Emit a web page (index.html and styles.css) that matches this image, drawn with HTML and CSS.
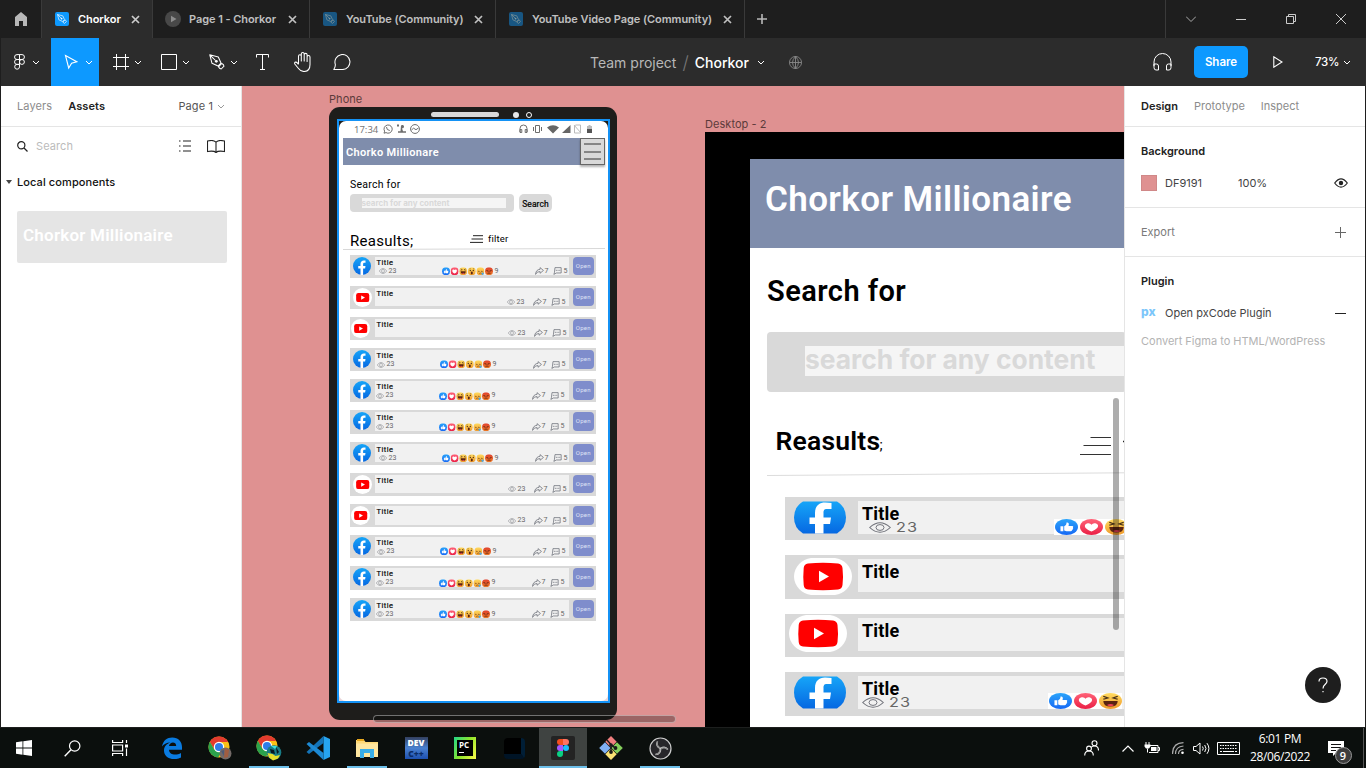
FILE: index.html
```html
<!DOCTYPE html>
<html lang="en">
<head>
<meta charset="utf-8">
<title>Chorkor – Figma</title>
<link rel="stylesheet" href="styles.css">
</head>
<body>
<svg class="defs" aria-hidden="true">
  <defs>
    <linearGradient id="fbg" x1="0" y1="0" x2="0" y2="1"><stop offset="0" stop-color="#16a5f8"/><stop offset="1" stop-color="#0668e2"/></linearGradient>
    <linearGradient id="likeg" x1="0" y1="0" x2="0" y2="1"><stop offset="0" stop-color="#2aa4fa"/><stop offset="1" stop-color="#1769f5"/></linearGradient>
    <linearGradient id="loveg" x1="0" y1="0" x2="0" y2="1"><stop offset="0" stop-color="#ff6378"/><stop offset="1" stop-color="#ea1f45"/></linearGradient>
    <linearGradient id="facg" x1="0" y1="0" x2="0" y2="1"><stop offset="0" stop-color="#ffdb60"/><stop offset="1" stop-color="#f09a2c"/></linearGradient>
    <linearGradient id="angg" x1="0" y1="0" x2="0" y2="1"><stop offset="0" stop-color="#e0402e"/><stop offset="1" stop-color="#ec7a24"/></linearGradient>
  </defs>
  <symbol id="chev" viewBox="0 0 8 5"><path d="M1 1l3 3 3-3" fill="none" stroke="currentColor"/></symbol>
  <symbol id="x" viewBox="0 0 9 9"><path d="M1 1l7 7M8 1l-7 7" stroke="currentColor" stroke-width="1.700"/></symbol>
  <symbol id="pen" viewBox="0 0 16 16"><path d="M.8.800l8.500 2.200 2.700 6-3 3-6-2.700zM.8.800l5.700 5.700M9.500 12.800l3.300-3.300q2 .8 2.200 2.700l-2.800 2.800q-1.900-.2-2.700-2.200z" fill="none" stroke="currentColor" stroke-width="1.050" stroke-linejoin="round"/><circle cx="7.300" cy="7.300" r="1.400" fill="currentColor"/></symbol>
  <symbol id="fb" viewBox="0 0 36 36" preserveAspectRatio="none"><circle cx="18" cy="18" r="18" fill="url(#fbg)"/><path d="M15 35.800V23h-4.500v-5.200H15v-3.900c0-4.500 2.600-7 6.700-7 1.500 0 3.300.3 3.300.3v4.300h-2c-2.200 0-2.800 1.200-2.800 2.600v3.700H25l-.8 5.200h-4v12.800c-1.700.3-3.500.3-5.200 0z" fill="#fff"/></symbol>
  <symbol id="fbwide" viewBox="0 0 52 33" preserveAspectRatio="none"><path d="M9 .5H43Q52 6 52 16.500T43 32.500H9Q0 27 0 16.500T9 .5z" fill="url(#fbg)"/><path d="M21 32.500V23h-5.500v-6.500H21V12C21 5 25 1.500 31 1.500q4 0 6.500.5v6H33c-3 0-3.500 1.500-3.500 4v4.500h7.500L36 23h-6.500v9.500z" fill="#fff"/></symbol>
  <symbol id="yt" viewBox="0 0 58 37" preserveAspectRatio="none"><path d="M17 0H41C50 1 58 9 58 18.500S50 36 41 37H17C8 36 0 28 0 18.500S8 1 17 0z" fill="#fff"/><path d="M14 5.500Q29 4 44 5.500q4 .5 4.500 4.500 1 8.500 0 17-.5 4-4.500 4.500-15 1.500-30 0-4-.5-4.300-4.500-.8-8.500 0-17Q10 6 14 5.500z" fill="#f00"/><path d="M25 12.800v11.400l10-5.700z" fill="#fff"/></symbol>
  <symbol id="ytround" viewBox="0 0 20 20"><circle cx="10" cy="10" r="10" fill="#fff"/><rect x="3.300" y="5.200" width="13.800" height="9.600" rx="2.300" fill="#f00"/><path d="M8.600 7.800v4.600l4-2.300z" fill="#fff"/></symbol>
  <symbol id="eye" viewBox="0 0 22 12" preserveAspectRatio="none"><path d="M.7 6Q11-4.300 21.300 6 11 16.300.7 6z" fill="none" stroke="#6e7078" stroke-width="1.100"/><ellipse cx="11" cy="6" rx="4" ry="3.200" fill="none" stroke="#6e7078"/></symbol>
  <symbol id="share" viewBox="0 0 16 14"><path d="M9 1l6 5-6 5V8Q3 7.500 1 13 1.500 4.500 9 4z" fill="none" stroke="#666973" stroke-width="1.300" stroke-linejoin="round"/></symbol>
  <symbol id="cmt" viewBox="0 0 16 14"><path d="M3.500 1h11v9.500H6L1.500 13l1-3z" fill="none" stroke="#666973" stroke-width="1.300"/><path d="M5 5.800h2M8 5.800h2M11 5.800h2" stroke="#666973" stroke-width="1.300"/></symbol>
  <symbol id="like" viewBox="0 0 16 16" preserveAspectRatio="none"><circle cx="8" cy="8" r="8" fill="url(#likeg)"/><path d="M3.800 7.200h2v5h-2zM6.400 7.300C7.700 6.500 8 5.300 8 3.600c1.500-.4 2 1.200 1.400 3.300h2.800q.9.500.3 1.500.5.900-.2 1.600.2 1-.5 1.300 0 .9-.9.900H8l-1.600-.6z" fill="#fff"/></symbol>
  <symbol id="love" viewBox="0 0 16 16" preserveAspectRatio="none"><circle cx="8" cy="8" r="8" fill="url(#loveg)"/><path d="M8 12.600C1 8.500 3.500 4 6 4.300q1.400.1 2 1.400.6-1.300 2-1.400c2.500-.3 5 4.200-2 8.300z" fill="#fff"/></symbol>
  <symbol id="haha" viewBox="0 0 16 16" preserveAspectRatio="none"><circle cx="8" cy="8" r="8" fill="url(#facg)"/><path d="M3 8h10q0 5.500-5 5.500T3 8z" fill="#5a2411"/><path d="M5.500 12q2.500-2 5 0-2.500 2.500-5 0z" fill="#ee4056"/><path d="M3 3.300l3.200 1.600L3 6.300M13 3.300L9.800 4.900 13 6.300" fill="none" stroke="#46301a" stroke-width="1.100"/></symbol>
  <symbol id="wow" viewBox="0 0 16 16"><circle cx="8" cy="8" r="8" fill="url(#facg)"/><circle cx="5" cy="6.500" r="1.300" fill="#4b2a16"/><circle cx="11" cy="6.500" r="1.300" fill="#4b2a16"/><ellipse cx="8" cy="11.500" rx="2" ry="2.800" fill="#5a2411"/><path d="M3.200 3.500l2.500-1M12.800 3.500l-2.500-1" stroke="#6b4318"/></symbol>
  <symbol id="sad" viewBox="0 0 16 16"><circle cx="8" cy="8" r="8" fill="url(#facg)"/><circle cx="5" cy="8" r="1.200" fill="#4b2a16"/><circle cx="11" cy="8" r="1.200" fill="#4b2a16"/><path d="M5.500 12.500q2.500-2 5 0" fill="none" stroke="#5a2411"/><circle cx="12.500" cy="13" r="2.300" fill="#4aa9e8"/></symbol>
  <symbol id="angry" viewBox="0 0 16 16"><circle cx="8" cy="8" r="8" fill="url(#angg)"/><path d="M3 6.500l4 1.500M13 6.500L9 8" stroke="#3b120b" stroke-width="1.500"/><path d="M5 12.300q3-1.500 6 0" fill="none" stroke="#3b120b" stroke-width="1.300"/></symbol>
  <symbol id="reacts" viewBox="0 0 102 16"><use href="#like" width="16" height="16"/><use href="#love" x="17.200" width="16" height="16"/><use href="#haha" x="34.400" width="16" height="16"/><use href="#wow" x="51.600" width="16" height="16"/><use href="#sad" x="68.800" width="16" height="16"/><use href="#angry" x="86" width="16" height="16"/></symbol>
  <symbol id="chrome" viewBox="0 0 24 24"><circle cx="12" cy="12" r="11.500" fill="#fbc116"/><path d="M2 6.300A11.500 11.500 0 0 1 22 6.500H12L7 15z" fill="#e33b2e"/><path d="M2 6.300A11.500 11.500 0 0 0 11 23.500L16.500 15 7 15z" fill="#2ba24c"/><circle cx="12" cy="12" r="5.700" fill="#fff"/><circle cx="12" cy="12" r="4.400" fill="#2f7de9"/></symbol>
</svg>

<header class="tabs">
  <div class="tab home"><svg width="12" height="14" viewBox="0 0 12 14"><path d="M6 0l6 5v9H8V9H4v5H0V5z" fill="#b8b8b8"/></svg></div>
  <div class="tab t1 on"><i class="fav"><svg width="10" height="10"><use href="#pen"/></svg></i><span>Chorkor</span><svg class="close" width="9" height="9"><use href="#x"/></svg></div>
  <div class="tab t2"><svg width="16" height="16" viewBox="0 0 16 16"><circle cx="8" cy="8" r="8" fill="#484848"/><path d="M6 4.700v6.600L11.500 8z" fill="#8d8d8d"/></svg><span>Page 1 - Chorkor</span><svg class="close" width="9" height="9"><use href="#x"/></svg></div>
  <div class="tab t3 dim"><i class="fav"><svg width="10" height="10"><use href="#pen"/></svg></i><span>YouTube (Community)</span><svg class="close" width="9" height="9"><use href="#x"/></svg></div>
  <div class="tab t4 dim"><i class="fav"><svg width="10" height="10"><use href="#pen"/></svg></i><span>YouTube Video Page (Community)</span><svg class="close" width="9" height="9"><use href="#x"/></svg></div>
  <svg class="plus" width="10" height="10" viewBox="0 0 10 10"><path d="M0 5h10M5 0v10" stroke="#b8b8b8" stroke-width="1.600"/></svg>
  <div class="winbtns">
    <svg width="10" height="6" viewBox="0 0 10 6"><path d="M0 .5l5 5 5-5" fill="none" stroke="#aaa"/></svg>
    <svg width="10" height="10" viewBox="0 0 10 10"><path d="M0 5.500h10" stroke="#ccc"/></svg>
    <svg width="10" height="10" viewBox="0 0 10 10"><path d="M.5 2.500h7v7h-7zM2.500 2.500v-2h7v7h-2" fill="none" stroke="#ccc"/></svg>
    <svg width="10" height="10" viewBox="0 0 10 10"><path d="M0 0l10 10M10 0L0 10" stroke="#ccc"/></svg>
  </div>
</header>

<nav class="toolbar">
  <div class="tool w51"><svg width="11" height="16" viewBox="0 0 11 16"><path d="M5.500.6H3a2.400 2.400 0 0 0 0 4.900h2.500zM5.500.6H8a2.400 2.400 0 0 1 0 4.900H5.500zM5.500 5.500H3a2.400 2.400 0 0 0 0 4.900h2.500zM3 10.400a2.400 2.400 0 1 0 2.500 2.500v-2.500zM8 5.500a2.450 2.450 0 1 1-2.500 2.400A2.450 2.450 0 0 1 8 5.500z" fill="none" stroke="#fff"/></svg><svg class="ch" width="8" height="5"><use href="#chev"/></svg></div>
  <div class="tool w48 sel"><svg width="14" height="16" viewBox="0 0 14 16"><path d="M1.500 1.500l11.300 6.300-5.200 1.400-2.900 4.800z" fill="none" stroke="#fff" stroke-width="1.100"/></svg><svg class="ch" width="8" height="5"><use href="#chev"/></svg></div>
  <div class="tool w48 p2"><svg width="16" height="16" viewBox="0 0 16 16"><path d="M3.500 0v16M12.500 0v16M0 3.500h16M0 12.500h16" stroke="#fff"/></svg><svg class="ch" width="8" height="5"><use href="#chev"/></svg></div>
  <div class="tool w48 p2"><svg width="16" height="16" viewBox="0 0 16 16"><path d="M.5.500h15v15H.5z" fill="none" stroke="#fff"/></svg><svg class="ch" width="8" height="5"><use href="#chev"/></svg></div>
  <div class="tool w48 p2"><svg width="16" height="16"><use href="#pen"/></svg><svg class="ch" width="8" height="5"><use href="#chev"/></svg></div>
  <div class="tool w40"><svg width="13" height="16" viewBox="0 0 13 16"><path d="M.5 3.500v-3h12v3M6.500.5v15M4 15.500h5" fill="none" stroke="#fff"/></svg></div>
  <div class="tool w40"><svg width="18" height="20" viewBox="0 0 18 20"><path d="M4.500 12V4.200a1.400 1.400 0 0 1 2.800 0V9 2a1.400 1.400 0 0 1 2.900 0v7V2.800a1.400 1.400 0 0 1 2.900 0V9.500 5a1.400 1.400 0 0 1 2.900 0v7.500c0 4-2 7-6 7-3 0-4.300-1.300-5.500-3L.8 12q-.6-1.600.8-1.900 1.200 0 1.900 1l1 1.400" transform="translate(1)" fill="none" stroke="#fff" stroke-width="1.050" stroke-linejoin="round"/></svg></div>
  <div class="tool w40"><svg width="18" height="16" viewBox="0 0 18 16"><path d="M.8 15.500H9.500A7.500 7.500 0 1 0 2.300 10.300Q2.600 13 .8 15.500z" fill="none" stroke="#fff" stroke-width="1.050" stroke-linejoin="round"/></svg></div>
  <div class="crumb"><span class="team">Team project</span><span class="slash">/</span><span class="file">Chorkor</span><svg width="8" height="5"><use href="#chev"/></svg><svg class="globe" width="13" height="13" viewBox="0 0 13 13"><path d="M6.500.5a6 6 0 1 0 .01 0zM.5 6.500h12M6.500.5v12M6.500.5q-6 6 0 12M6.500.5q6 6 0 12" fill="none" stroke="#8a8a8a" stroke-width=".9"/></svg></div>
  <div class="right">
    <svg width="19" height="18" viewBox="0 0 19 18"><path d="M1 13V9a8.500 8.500 0 0 1 17 0v4M1 11h2.500q2 0 2 2v4H3q-2 0-2-2.500zM18 11h-2.500q-2 0-2 2v4H16q2 0 2-2.500z" fill="none" stroke="#fff"/></svg>
    <button class="sharebtn">Share</button>
    <svg width="10" height="12" viewBox="0 0 10 12"><path d="M.8.800v10.400L9 6z" fill="none" stroke="#fff" stroke-width="1.100"/></svg>
    <span class="zoom">73%</span><svg width="8" height="5"><use href="#chev"/></svg>
  </div>
</nav>

<main class="work">
  <aside class="left">
    <div class="lhead"><span class="mut">Layers</span><b>Assets</b><span class="pg">Page 1</span><svg width="8" height="5"><use href="#chev"/></svg></div>
    <div class="lsearch"><svg width="11" height="11" viewBox="0 0 11 11"><circle cx="4.300" cy="4.300" r="3.600" fill="none" stroke="#222" stroke-width="1.200"/><path d="M7 7l3.500 3.500" stroke="#222" stroke-width="1.300"/></svg><span>Search</span>
      <svg class="list" width="12" height="12" viewBox="0 0 12 12"><path d="M0 1h1.500M4 1h8M0 6h1.500M4 6h8M0 11h1.500M4 11h8" stroke="#222" stroke-width="1.100"/></svg>
      <svg width="18" height="13" viewBox="0 0 18 13"><path d="M9 2.300Q7-.5.5 1v10.500q6.500-1 8.500 1 2-2 8.500-1V1Q11-.5 9 2.300zM9 2.300v10" fill="none" stroke="#222" stroke-width="1.100"/></svg></div>
    <div class="local"><i></i>Local components</div>
    <div class="comp">Chorkor Millionaire</div>
  </aside>

  <section class="canvas">
    <div class="flabel phl">Phone</div>
    <div class="phone">
      <div class="speaker"><i class="bar"></i><i class="dot"></i><i class="ring"></i></div>
      <div class="screen"><div class="page">
        <div class="status"><span>17:34</span>
          <svg width="45" height="10" viewBox="0 0 45 10"><g fill="none" stroke="#6d6d6d"><path d="M1 9.200l.6-2A4.100 4.100 0 1 1 3 8.600z"/><path d="M3.500 3q0 3.300 3.300 3.500M32 .6a4.400 4.400 0 1 0 .01 0zM28.500 6l2-1.800 2.500 1.500 2.500-1.700"/></g><path d="M18 1.500a1.700 1.700 0 1 1 1 2.800l1 3h3v1.500h-8V7.300h2.500zM14 .5h2v2h-2z" fill="#6d6d6d"/></svg>
          <svg class="sr" width="75" height="10" viewBox="0 0 75 10"><path d="M1 8V4.500a3.300 3.300 0 0 1 7 0V8M1 5.500h1.800v3H1zM6.200 5.500H8v3H6.200zM16.500 1.500h4v7h-4zM14.500 3v4M22.500 3v4" fill="none" stroke="#6d6d6d"/><path d="M28 3.500Q34-1 40 3.500L34 9.500zM51.500 1v8H43z" fill="#666"/><path d="M56.500 1h5v8h-6V2zM55 1l7 8" fill="none" stroke="#bbb"/><path d="M68 2h5v4h-5zM69.500 1h2v1h-2z" fill="#bbb"/><path d="M68 5h5v4h-5z" fill="#555"/></svg></div>
        <div class="phead"><span>Chorko Millionare</span><div class="menu"><svg width="18" height="17" viewBox="0 0 18 17"><path d="M0 1h17M0 9h17M0 16h17" stroke="#333"/></svg></div></div>
        <div class="sfor">Search for</div>
        <div class="sbar"><div class="sbox"><div>search for any content</div></div><div class="sbtn">Search</div></div>
        <div class="res"><span>Reasults;</span><svg width="13" height="8" viewBox="0 0 13 8"><path d="M3 .7h10M1.500 4h11.500M0 7.400h13" stroke="#222"/></svg><em>filter</em></div>
        <svg class="rule" width="262" height="2" viewBox="0 0 262 2"><path d="M0 1.500L262 .5" stroke="#d8d8d8"/></svg>
        <div class="rows">
          <div class="row fb a"><svg class="lg"><use href="#fb"/></svg><div class="bd"><b>Title</b><div class="mt"><span class="v"><svg><use href="#eye"/></svg>23</span><span class="r"><svg><use href="#reacts"/></svg>9</span><span class="s"><svg><use href="#share"/></svg>7</span><span class="c"><svg><use href="#cmt"/></svg>5</span></div></div><div class="op">Open</div></div>
          <div class="row yt"><svg class="lg"><use href="#ytround"/></svg><div class="bd"><b>Title</b><div class="mt"><span class="v"><svg><use href="#eye"/></svg>23</span><span class="s"><svg><use href="#share"/></svg>7</span><span class="c"><svg><use href="#cmt"/></svg>5</span></div></div><div class="op">Open</div></div>
          <div class="row yt b"><svg class="lg"><use href="#ytround"/></svg><div class="bd"><b>Title</b><div class="mt"><span class="v"><svg><use href="#eye"/></svg>23</span><span class="s"><svg><use href="#share"/></svg>7</span><span class="c"><svg><use href="#cmt"/></svg>5</span></div></div><div class="op">Open</div></div>
          <div class="row fb"><svg class="lg"><use href="#fb"/></svg><div class="bd"><b>Title</b><div class="mt"><span class="v"><svg><use href="#eye"/></svg>23</span><span class="r"><svg><use href="#reacts"/></svg>9</span><span class="s"><svg><use href="#share"/></svg>7</span><span class="c"><svg><use href="#cmt"/></svg>5</span></div></div><div class="op">Open</div></div>
          <div class="row fb l"><svg class="lg"><use href="#fb"/></svg><div class="bd"><b>Title</b><div class="mt"><span class="v"><svg><use href="#eye"/></svg>23</span><span class="r"><svg><use href="#reacts"/></svg>9</span><span class="s"><svg><use href="#share"/></svg>7</span><span class="c"><svg><use href="#cmt"/></svg>5</span></div></div><div class="op">Open</div></div>
          <div class="row fb l"><svg class="lg"><use href="#fb"/></svg><div class="bd"><b>Title</b><div class="mt"><span class="v"><svg><use href="#eye"/></svg>23</span><span class="r"><svg><use href="#reacts"/></svg>9</span><span class="s"><svg><use href="#share"/></svg>7</span><span class="c"><svg><use href="#cmt"/></svg>5</span></div></div><div class="op">Open</div></div>
          <div class="row fb a"><svg class="lg"><use href="#fb"/></svg><div class="bd"><b>Title</b><div class="mt"><span class="v"><svg><use href="#eye"/></svg>23</span><span class="r"><svg><use href="#reacts"/></svg>9</span><span class="s"><svg><use href="#share"/></svg>7</span><span class="c"><svg><use href="#cmt"/></svg>5</span></div></div><div class="op">Open</div></div>
          <div class="row yt c2"><svg class="lg"><use href="#ytround"/></svg><div class="bd"><b>Title</b><div class="mt"><span class="v"><svg><use href="#eye"/></svg>23</span><span class="s"><svg><use href="#share"/></svg>7</span><span class="c"><svg><use href="#cmt"/></svg>5</span></div></div><div class="op">Open</div></div>
          <div class="row yt b c2"><svg class="lg"><use href="#ytround"/></svg><div class="bd"><b>Title</b><div class="mt"><span class="v"><svg><use href="#eye"/></svg>23</span><span class="s"><svg><use href="#share"/></svg>7</span><span class="c"><svg><use href="#cmt"/></svg>5</span></div></div><div class="op">Open</div></div>
          <div class="row fb"><svg class="lg"><use href="#fb"/></svg><div class="bd"><b>Title</b><div class="mt"><span class="v"><svg><use href="#eye"/></svg>23</span><span class="r"><svg><use href="#reacts"/></svg>9</span><span class="s"><svg><use href="#share"/></svg>7</span><span class="c"><svg><use href="#cmt"/></svg>5</span></div></div><div class="op">Open</div></div>
          <div class="row fb l"><svg class="lg"><use href="#fb"/></svg><div class="bd"><b>Title</b><div class="mt"><span class="v"><svg><use href="#eye"/></svg>23</span><span class="r"><svg><use href="#reacts"/></svg>9</span><span class="s"><svg><use href="#share"/></svg>7</span><span class="c"><svg><use href="#cmt"/></svg>5</span></div></div><div class="op">Open</div></div>
          <div class="row fb l"><svg class="lg"><use href="#fb"/></svg><div class="bd"><b>Title</b><div class="mt"><span class="v"><svg><use href="#eye"/></svg>23</span><span class="r"><svg><use href="#reacts"/></svg>9</span><span class="s"><svg><use href="#share"/></svg>7</span><span class="c"><svg><use href="#cmt"/></svg>5</span></div></div><div class="op">Open</div></div>
        </div>
      </div></div>
    </div>

    <div class="flabel dkl">Desktop - 2</div>
    <div class="desk"><div class="dpage">
      <div class="dhead">Chorkor Millionaire</div>
      <div class="dsfor">Search for</div>
      <div class="dbox"><div>search for any content</div></div>
      <div class="dres"><b>Reasults</b><span>;</span><svg width="46" height="20" viewBox="0 0 46 20"><path d="M10.500 1.500H31M3.500 9.500H31M0 18.500H31" stroke="#333" stroke-width="1.200"/><path d="M43 5.500h3" stroke="#222" stroke-width="1.500"/></svg></div>
      <svg class="drule" width="358" height="4" viewBox="0 0 358 4"><path d="M0 3.500L358 .8" stroke="#dcdcdc"/></svg>
      <div class="drow"><div class="lgc"><svg width="52" height="33"><use href="#fbwide"/></svg></div><div class="db"><b>Title</b><div class="dv"><svg width="22" height="11"><use href="#eye"/></svg><span>23</span></div></div><div class="rc"><svg><use href="#like"/></svg><svg><use href="#love"/></svg><svg><use href="#haha"/></svg></div></div>
      <div class="drow"><div class="lgc"><svg class="y" width="58" height="37"><use href="#yt"/></svg></div><div class="db"><b>Title</b></div></div>
      <div class="drow"><div class="lgc y2"><svg class="y" width="58" height="37"><use href="#yt"/></svg></div><div class="db"><b>Title</b></div></div>
      <div class="drow last"><div class="lgc"><svg width="52" height="33"><use href="#fbwide"/></svg></div><div class="db"><b>Title</b><div class="dv"><svg width="22" height="11"><use href="#eye"/></svg><span>23</span></div></div><div class="rc"><svg><use href="#like"/></svg><svg><use href="#love"/></svg><svg><use href="#haha"/></svg></div></div>
    </div></div>
    <i class="vbar"></i><i class="hbar"></i>
  </section>

  <aside class="rightp">
    <div class="rtabs"><b>Design</b><span>Prototype</span><span>Inspect</span></div>
    <div class="sec bg"><b>Background</b><div class="line"><i class="sw"></i><span class="hex">DF9191</span><span>100%</span><svg class="end" width="14" height="10" viewBox="0 0 14 10"><path d="M.7 5Q7-3.300 13.300 5 7 13.300.7 5z" fill="none" stroke="#222" stroke-width="1.200"/><circle cx="7" cy="5" r="2.200" fill="#222"/></svg></div></div>
    <div class="sec ex"><span>Export</span><svg class="end" width="11" height="11" viewBox="0 0 11 11"><path d="M0 5.500h11M5.500 0v11" stroke="#666"/></svg></div>
    <div class="plug"><b>Plugin</b><div class="line"><span class="px">px</span><span>Open pxCode Plugin</span><svg class="end" width="11" height="3" viewBox="0 0 11 3"><path d="M0 1.500h11" stroke="#222"/></svg></div><p>Convert Figma to HTML/WordPress</p></div>
    <div class="help"><svg width="10" height="16" viewBox="0 0 10 16"><path d="M1 4.500Q1 1 5 1t4 3.300C9 7.500 5 7 5 11.500M5 14v1.300" fill="none" stroke="#fff" stroke-width="1.200"/></svg></div>
  </aside>
</main>

<footer class="task">
  <div class="ti w48"><svg width="16" height="16" viewBox="0 0 16 16"><path d="M0 2.200L6.500 1.300v6.300H0zM7.300 1.200L16 0v7.600H7.300zM0 8.400h6.500v6.300L0 13.800zM7.300 8.400H16V16l-8.700-1.200z" fill="#fff"/></svg></div>
  <div class="ti w48"><svg width="17" height="17" viewBox="0 0 17 17"><circle cx="10.700" cy="6" r="5.200" fill="none" stroke="#fff" stroke-width="1.200"/><path d="M7 9.700L.7 16.300" stroke="#fff" stroke-width="1.400"/></svg></div>
  <div class="ti w48 tv"><svg width="17" height="16" viewBox="0 0 17 16"><path d="M.6 0v2.500h10V0M.6 5h10v6H.6zM.6 16v-2.500h10V16M14.500 0v3M14.500 8.500V16" fill="none" stroke="#fff" stroke-width="1.200"/><path d="M13 4.500h3v3h-3z" fill="#fff"/></svg></div>
  <div class="ti"><svg width="22" height="22" viewBox="0 0 22 22"><path d="M1 9.500C2 3.500 6 .4 11.300.4c6 0 9.700 4.200 9.700 9.700v2.600H8c.3 5.500 7.300 6 12 3.300v4.500C12 24.500 3 21 3 13.500c0-4 2.500-6.800 6.500-8C5.500 5.500 2.500 7.500 1 9.500zM8 9h7.200c0-4.800-6.500-4.500-7.200 0z" fill="#0a7be0" fill-rule="evenodd"/></svg></div>
  <div class="ti"><svg width="24" height="24" viewBox="0 0 24 24"><use href="#chrome" width="22" height="22"/><circle cx="17.500" cy="17.500" r="6" fill="#736a67"/><path d="M17 12l4 2-1 7-4 1z" fill="#a05d41"/><path d="M13 15l3-1v6z" fill="#4b5b7a"/></svg></div>
  <div class="ti un"><svg width="26" height="26" viewBox="0 0 26 26"><use href="#chrome" width="22" height="22"/><circle cx="18" cy="17.500" r="7.300" fill="#187c86"/><path d="M11.500 18l5 1 3 2 4.500-1-2 3.500-5 2-4-3z" fill="#e5df2a"/><path d="M14 14l4 1 1 4-4-1zM20 12l3 5-2 2z" fill="#061820"/><path d="M15 11l6 0-2 3z" fill="#3be0e0"/></svg></div>
  <div class="ti"><svg width="24" height="24" viewBox="0 0 24 24"><path d="M17.500 0L24 3v18l-6.500 3z" fill="#26a4f0"/><path d="M17.500 0v7L3 18 .5 16z" fill="#1474b8"/><path d="M17.500 24v-7L3 6 .5 8z" fill="#1d8ad4"/></svg></div>
  <div class="ti un"><svg width="22" height="19" viewBox="0 0 22 19"><path d="M0 1h8l1.500 2H22v15H0z" fill="#ffd977"/><path d="M0 4.500h22V18H0z" fill="#ffe7a0"/><path d="M1 0h7v2H1z" fill="#e9a91f"/><path d="M4 10h14v9h-4v-5H8v5H4z" fill="#3aaee8"/></svg></div>
  <div class="ti"><div class="dev"><span>DEV</span><em>C++</em></div></div>
  <div class="ti"><div class="pc"><span>PC</span></div></div>
  <div class="ti"><div class="ps"></div></div>
  <div class="ti act"><div class="fig"><svg width="12" height="18" viewBox="0 0 12 18"><path d="M6 0v6H3a3 3 0 0 1 0-6z" fill="#f24e1e"/><path d="M6 0h3a3 3 0 0 1 0 6H6z" fill="#ff7262"/><path d="M6 6v6H3a3 3 0 0 1 0-6z" fill="#a259ff"/><circle cx="9" cy="9" r="3" fill="#1abcfe"/><path d="M6 12v3a3 3 0 1 1-3-3z" fill="#0acf83"/></svg></div></div>
  <div class="ti"><svg width="24" height="24" viewBox="0 0 24 24"><path d="M12 0l5.700 5.700L12 11.500 6.300 5.700z" fill="#f07f7f"/><path d="M6 6.300l5.500 5.700L6 17.700.2 12z" fill="#7fb0f5"/><path d="M18 6.300l5.800 5.700L18 17.700 12.500 12z" fill="#85cf5c"/><path d="M12 12.500l5.700 5.700L12 24l-5.700-5.800z" fill="#fbe274"/><path d="M8 4l4 4.500v7M12 8.500l4 3.500" fill="none" stroke="#1a1a1a" stroke-width="1.400"/><circle cx="12" cy="9" r="1.800" fill="#1a1a1a"/><circle cx="12" cy="16" r="1.900" fill="#1a1a1a"/><circle cx="16.500" cy="12" r="1.900" fill="#1a1a1a"/></svg></div>
  <div class="ti un"><svg width="23" height="23" viewBox="0 0 23 23"><circle cx="11.500" cy="11.500" r="10.500" fill="#27262a" stroke="#ccc" stroke-width="1.200"/><path d="M11.500 11.500Q6.500 9 8.500 4.500M11.500 11.500Q16 8.500 18.800 12.500M11.500 11.500Q12 17 6.500 17.500" fill="none" stroke="#ccc" stroke-width="1.500"/><path d="M8.500 4.500Q7 9 11 11M18.800 12.500Q15.500 9.500 12 12M6.500 17.500Q11 16.500 11 12" fill="none" stroke="#888" stroke-width="1.200"/></svg></div>
  <div class="tray">
    <svg class="ppl" width="15" height="16" viewBox="0 0 15 16"><g fill="none" stroke="#fff" stroke-width="1.100"><circle cx="10.500" cy="3.200" r="2.500"/><circle cx="5" cy="8.500" r="2.400"/><path d="M.7 15.500q0-4.500 4.300-4.500t4.300 4.500M7 7.500Q8 6 10.500 6q4 0 4 4.500"/></g></svg>
    <svg width="12" height="7" viewBox="0 0 12 7"><path d="M.5 6.500L6 1l5.500 5.500" fill="none" stroke="#fff" stroke-width="1.200"/></svg>
    <svg width="16" height="12" viewBox="0 0 16 12"><path d="M5.500 3.500H14v7H5M14 5.500h1.500v3H14M2 0v3M5 0v3M3.500 6.500v4" fill="none" stroke="#fff"/><path d="M7 5h5.500v4H7zM.5 2.500h6v2l-1.500 2H2L.5 4.500z" fill="#fff"/></svg>
    <svg width="12" height="12" viewBox="0 0 12 12"><path d="M.5 12Q.5 1 11.500.7M3.500 12Q3.500 4.500 11.500 4M6.500 12q0-4.500 5-4.700" fill="none" stroke="#aaa" stroke-width="1.200"/><circle cx="10.500" cy="10.700" r="1.300" fill="#fff"/></svg>
    <svg width="17" height="13" viewBox="0 0 17 13"><path d="M.5 4.500H3L7 1v11L3 8.500H.5zM9.500 4.500q1.500 2 0 4M11.700 3q2.600 3.500 0 7M14 1.200q3.800 5.300 0 10.600" fill="none" stroke="#fff"/></svg>
    <svg width="23" height="13" viewBox="0 0 23 13"><path d="M.5.500h22v12H.5z" fill="none" stroke="#fff"/><path d="M3 3.500h17M3 6.500h17" stroke="#fff" stroke-dasharray="1.500 1"/><path d="M3 9.500h2M6 9.500h11M18 9.500h2" stroke="#fff"/></svg>
    <div class="clock">6:01 PM<br>28/06/2022</div>
    <div class="note"><svg width="16" height="15" viewBox="0 0 16 15"><path d="M0 0h16v12H8l-3 3v-3H0z" fill="#fff"/><path d="M3 3.500h10M3 6.500h10M3 9.500h5" stroke="#111"/></svg><span>9</span></div>
    <i class="peek"></i>
  </div>
</footer>
</body>
</html>
```

FILE: styles.css
```css
* { box-sizing: border-box; }
body { margin: 0; width: 1366px; height: 768px; overflow: hidden; background: #1e1e1e; font: 11px Inter, sans-serif; display: flex; flex-direction: column; }
.defs { position: absolute; width: 0; height: 0; }
svg { display: block; flex: none; }
b { font-weight: 600; }
i, em { font-style: normal; }

/* window tabs */
.tabs { height: 38px; flex: none; display: flex; align-items: center; background: #1e1e1e; color: #c0c0c0; font-weight: 600; letter-spacing: -.06px; }
.tab { height: 38px; display: flex; align-items: center; border-right: 1px solid #3a3a3a; padding-left: 14px; white-space: nowrap; gap: 9px; }
.tab .close { margin-left: auto; }
.home { width: 42px; padding-left: 15px; }
.on { background: #2c2c2c; color: #fff; }
.on .close { color: #ccc; }
.t1 { width: 111px; padding-left: 13px; padding-right: 12px; }
.t2 { width: 157px; padding-left: 12px; padding-right: 12px; gap: 8px; }
.t3 { width: 186px; padding-left: 13px; padding-right: 12px; }
.t4 { width: 249px; padding-left: 13px; padding-right: 12px; }
.fav { width: 14px; height: 14px; border-radius: 2px; background: #0d99ff; color: #fff; display: grid; place-items: center; }
.dim .fav { background: #185682; color: #899; }
.plus { margin-left: 12px; }
.winbtns { margin-left: auto; height: 38px; width: 201px; border-left: 1px solid #3a3a3a; display: flex; align-items: center; gap: 40px; padding-left: 20px; }

/* toolbar */
.toolbar { height: 48px; flex: none; display: flex; align-items: center; background: #2c2c2c; color: #fff; margin-left: 1px; }
.tool { height: 48px; display: flex; align-items: center; flex: none; gap: 7px; }
.w51 { width: 50px; padding-left: 13px; gap: 7px; }
.w48 { width: 48px; }
.w40 { width: 40px; padding-right: 2px; justify-content: center; }
.sel { background: #0d99ff; padding-left: 13px; }
.p2 { padding-left: 14px; gap: 5px; }
.crumb { display: flex; align-items: center; font-size: 14px; margin-left: 227px; white-space: nowrap; }
.team { color: #b8b8b8; }
.slash { color: #777; margin: 0 6px; font-size: 18px; font-weight: 300; }
.file { font-weight: 500; margin-right: 8px; }
.globe { margin-left: 24px; }
.right { margin-left: auto; display: flex; align-items: center; padding-right: 15px; }
.sharebtn { width: 54px; height: 32px; border: 0; border-radius: 5px; background: #0d99ff; color: #fff; font: 600 11.500px Inter, sans-serif; padding: 0; margin: 0 25px 0 22px; }
.zoom { font-size: 11.500px; font-weight: 500; margin: 0 6px 0 32px; width: 22px; white-space: nowrap; letter-spacing: -.3px; }

/* work area */
.work { height: 641px; flex: none; display: flex; position: relative; }
.left { width: 242px; flex: none; background: #fff; border-left: 1px solid #1e1e1e; border-right: 1px solid #e5e5e5; letter-spacing: .1px; }
.lhead { height: 41px; border-bottom: 1px solid #e5e5e5; display: flex; align-items: center; padding: 0 16px; color: #555; }
.lhead .mut { color: #8c8c8c; }
.lhead b { color: #222; margin-left: 16px; }
.lhead .pg { margin-left: auto; margin-right: 4px; }
.lhead svg { color: #999; }
.lsearch { height: 38px; display: flex; align-items: center; padding: 0 16px 0 15.500px; color: #bbb; }
.lsearch span { margin-left: 8.500px; }
.lsearch .list { margin-left: auto; margin-right: 16px; }
.local { height: 34px; display: flex; align-items: center; font-weight: 500; color: #111; padding-left: 5px; }
.local i { border: 3px solid transparent; border-top: 4px solid #444; border-bottom: 0; margin-right: 5px; }
.comp { margin: 12px 0 0 16px; width: 210px; height: 52px; border-radius: 2px; background: #e5e5e5; color: #fff; font: 600 17px/48px Roboto, sans-serif; padding-left: 6px; letter-spacing: .22px; white-space: nowrap; }

.canvas { width: 882px; flex: none; background: #df9191; position: relative; overflow: hidden; }
.flabel { position: absolute; color: #5c3b3b; line-height: 14px; letter-spacing: .05px; }
.phl { left: 87px; top: 6px; }
.dkl { left: 463px; top: 31px; }

/* phone frame */
.phone { position: absolute; left: 87px; top: 21px; width: 288px; height: 613px; background: #1e1d1b; border-radius: 11px; }
.speaker { height: 12px; display: flex; align-items: center; padding: 3px 0 0 102px; }
.bar { width: 68px; height: 5px; border-radius: 3px; background: #d9d9d9; }
.dot { width: 6px; height: 6px; border-radius: 50%; background: #e8e8e8; margin-left: 14px; }
.ring { width: 6px; height: 6px; border-radius: 50%; border: 1.500px solid #fff; margin-left: 7px; }
.screen { margin-left: 8px; width: 273px; height: 584px; border: 2px solid #1492f5; background: linear-gradient(#1e1d1b 50%, #e9d5d8 50%); font-family: Roboto, sans-serif; }
.page { height: 580px; background: #fff; border-radius: 7px; overflow: hidden; padding-left: 3.500px; }
.status { height: 16.500px; display: flex; align-items: center; color: #777; font: 9.500px "Noto Sans", sans-serif; padding: 0 14px 0 11.500px; }
.status svg { margin-left: 5px; }
.status .sr { margin-left: auto; }
.phead { width: 262px; height: 27px; background: #7f8dac; color: #fff; display: flex; justify-content: space-between; align-items: center; font-size: 11px; font-weight: 600; letter-spacing: .33px; }
.phead span { margin: 3px 0 0 3.500px; }
.menu { width: 25px; height: 27px; background: #d9d9d9; border: 1px solid #666; box-shadow: 0 2px 2px rgba(0,0,0,.3); padding: 4px 0 0 3px; }
.sfor { margin: 13px 0 0 7.500px; font-size: 10.500px; line-height: 13px; letter-spacing: .25px; height: 16px; }
.sbar { display: flex; gap: 5px; margin-left: 7.500px; }
.sbox { width: 164px; height: 18px; border-radius: 4px; background: #d9d9d9; padding: 4px 0 0 11.500px; }
.sbox div { width: 144px; height: 10px; background: #f5f5f5; color: #d9d9d9; font: 700 8px/10px Inter, sans-serif; }
.sbtn { width: 33px; height: 18px; border-radius: 5px; background: #d9d9d9; font-size: 8.500px; font-weight: 400; line-height: 20px; text-align: center; letter-spacing: .1px; -webkit-text-stroke: .2px #000; }
.res { height: 36.500px; margin-left: 7.500px; display: flex; align-items: flex-end; }
.res span { font-size: 15px; line-height: 17px; letter-spacing: .28px; width: 120px; height: 15.500px; }
.res svg { margin-bottom: 5px; }
.res em { font-size: 9.500px; line-height: 12px; letter-spacing: .2px; margin: 0 0 3px 5px; }
.rows { margin: 4.500px 0 0 7.500px; }
.row { width: 246px; height: 23.200px; margin-bottom: 8px; background: #d9d9d9; display: flex; padding: 2px 2px 0 2.500px; }
.lg { width: 18px; height: 18px; }
.yt .lg { width: 19px; height: 19px; }
.yt.b .lg { margin-left: -1.500px; margin-right: 1.500px; }
.bd { width: 194.500px; height: 18.500px; background: #f1f1f1; margin-left: 4px; }
.yt .bd { margin-left: 3px; }
.bd b { display: block; font-size: 7.500px; line-height: 11px; height: 10px; font-weight: 400; letter-spacing: .5px; padding-left: 2px; -webkit-text-stroke: .2px #111; }
.mt { display: flex; align-items: center; height: 9px; font-size: 7px; line-height: 9px; color: #666; padding-left: 2px; }
.yt .mt { padding-left: 132px; }
.yt.b .mt, .yt.c2 .mt { padding-left: 133px; }
.mt span { display: flex; align-items: center; flex: none; }
.mt .v { width: 63px; gap: 2px; }
.yt .mt .v { width: 26px; }
.v svg { width: 8px; height: 6px; }
.r { width: 93px; gap: 2px; }
.r svg { width: 51px; height: 8.500px; }
.s { width: 18px; gap: 1px; }
.s svg, .c svg { width: 9px; height: 8px; }
.c { gap: 2px; }
.fb.a .mt { padding-left: 4px; }
.fb.l .mt { padding-left: 1px; }
.op { width: 20.500px; height: 18.500px; border-radius: 4px; background: #7f8dcc; color: #dfe3f5; font-size: 6px; line-height: 18px; text-align: center; letter-spacing: .25px; margin-left: 4px; }

/* desktop frame */
.desk { position: absolute; left: 463px; top: 46px; width: 420px; height: 596px; background: #000; padding: 27px 0 0 45px; overflow: hidden; font-family: Roboto, sans-serif; white-space: nowrap; }
.dpage { height: 570px; width: 376px; background: #fff; overflow: hidden; }
.dhead { height: 89px; background: #7f8dac; color: #fff; font-size: 35px; font-weight: 600; line-height: 81px; padding-left: 15px; letter-spacing: .38px; }
.dsfor { font-size: 29px; font-weight: 600; line-height: 33px; margin: 27px 0 0 17px; height: 57px; letter-spacing: .45px; }
.dbox { margin-left: 17px; height: 59.500px; border-radius: 4px; background: #d9d9d9; padding: 14px 0 0 38px; }
.dbox div { height: 29.500px; background: #f5f5f5; color: #d9d9d9; font: 700 26.400px/27px Inter, sans-serif; }
.dres { display: flex; margin: 32px 0 0 25.500px; height: 48.500px; font-size: 26.500px; line-height: 34px; }
.dres b { width: 104px; letter-spacing: .2px; }
.dres span { font-size: 15px; line-height: 42px; width: 200.500px; }
.dres svg { margin-top: 12px; }
.drule { margin-left: 17px; }
.drow { margin: 20.500px 0 15px 35px; height: 43.500px; background: #d9d9d9; display: flex; position: relative; }
.drow + .drow { margin-top: 0; }
.lgc { width: 73px; padding: 4px 0 0 8.500px; }
.lgc .y { margin-top: -1.500px; }
.y2 { padding: 3px 0 0 4px; }
.db { flex: 1; height: 33px; margin-top: 4px; background: #f1f1f1; padding-left: 4px; }
.db b { display: block; font-size: 18px; font-weight: 700; line-height: 20px; height: 20px; padding-top: 3px; letter-spacing: .2px; }
.dv { display: flex; align-items: center; padding-left: 7px; gap: 5px; color: #666; font-size: 13px; line-height: 13px; height: 13px; }
.dv span { font-family: Inter, sans-serif; letter-spacing: .8px; transform: scaleX(1.25); transform-origin: left; }
.last .dv { padding-left: 0; }
.rc { position: absolute; left: 269px; top: 22px; background: #fff; display: flex; gap: 2px; padding-left: 1px; }
.rc svg { width: 23px; height: 16px; }
.last .rc { left: 262.500px; top: 21px; }
.vbar { position: absolute; left: 871px; top: 312px; width: 6px; height: 232px; border-radius: 3px; background: rgba(0,0,0,.32); }
.hbar { position: absolute; left: 131px; top: 629px; width: 303px; height: 8px; border-radius: 4px; background: rgba(0,0,0,.3); border: 1px solid rgba(255,255,255,.4); }

/* properties panel */
.rightp { width: 241px; flex: none; background: #fff; border-left: 1px solid #e5e5e5; color: #444; letter-spacing: 0; position: relative; }
.rightp b { color: #222; }
.rtabs { height: 41px; border-bottom: 1px solid #e5e5e5; display: flex; align-items: center; padding-left: 16px; gap: 16px; color: #8c8c8c; }
.sec { border-bottom: 1px solid #e5e5e5; padding: 0 19px 0 16px; }
.bg { height: 81px; padding-top: 17px; padding-right: 17px; }
.line { display: flex; align-items: center; }
.bg .line { margin-top: 17px; height: 16px; }
.sw { width: 16px; height: 16px; background: #df9191; border: 1px solid #d08888; margin-right: 8px; }
.hex { width: 73px; }
.end { margin-left: auto; }
.ex { height: 49px; display: flex; align-items: center; color: #7a7a7a; }
.plug { padding: 17px 19px 0 16px; }
.plug .line { margin-top: 17px; height: 16px; }
.px { width: 24px; color: #7cc6fa; font-weight: 800; font-size: 12px; line-height: 12px; padding-bottom: 3px; }
.plug p { margin: 13px 0 0; color: #b3b3b3; white-space: nowrap; }
.help { position: absolute; left: 180px; top: 581px; width: 36px; height: 36px; border-radius: 50%; background: #1e1e1e; display: grid; place-items: center; }

/* taskbar */
.task { height: 41px; flex: none; background: #0b0f0d; border-top: 1px solid #1d1f1e; display: flex; }
.ti { width: 49px; height: 40px; display: grid; place-items: center; flex: none; }
.ti.w48 { width: 48px; }
.tv { margin-right: 3px; }
.un { background: linear-gradient(#6cbfe9, #6cbfe9) center bottom / 40px 2px no-repeat; }
.act { background: linear-gradient(#6cbfe9, #6cbfe9) center bottom / 100% 2px no-repeat #3f4341; width: 48px; }
.ti:nth-child(n+5) { position: relative; left: -.5px; }
.dev { width: 23px; height: 22px; background: linear-gradient(#33405f, #4a80cf 50%, #1d50b0); color: #fff; font: 800 8.500px/11px "Open Sans", sans-serif; text-align: center; }
.dev span { display: block; height: 11px; }
.dev em { display: block; color: #0b2c66; line-height: 11px; font-size: 8.500px; }
.pc { width: 22px; height: 22px; background: linear-gradient(120deg, #21d789, #8ee52a 50%, #fcf84a); padding: 3px; }
.pc span { display: block; height: 16px; background: #000; color: #fff; font: 700 8px/10px "Open Sans", sans-serif; padding-left: 2px; }
.pc span::after { content: ""; display: block; width: 5px; height: 1px; background: #fff; margin-top: 2px; }
.ps { width: 21px; height: 21px; border-radius: 4px; background: #000; border-right: 4px solid #001e36; border-bottom: 5px solid #001426; }
.fig { width: 24px; height: 24px; background: #232323; border-radius: 2px; display: grid; place-items: center; }
.tray { margin-left: auto; display: flex; align-items: center; color: #fff; }
.ppl { margin-right: 23px; }
.tray > svg + svg { margin-right: 9px; }
.tray > svg:nth-child(2) { margin-right: 10px; }
.tray > svg:nth-child(3) { margin-right: 12px; }
.tray > svg:nth-child(5) { margin-right: 7px; }
.clock { font: 12px/18px "Open Sans", sans-serif; letter-spacing: -.35px; text-align: center; width: 62px; margin-top: -1px; }
.note { position: relative; margin-left: 17px; width: 36px; }
.note span { position: absolute; left: 6.500px; top: 6px; width: 17px; height: 17px; border-radius: 50%; background: #3d3d3d; border: 1px solid #999; font: 600 11px/15px "Open Sans", sans-serif; text-align: center; }
.tray .note { margin-right: -1px; }
.peek { width: 3px; height: 40px; border-left: 1px solid #555; }
```
